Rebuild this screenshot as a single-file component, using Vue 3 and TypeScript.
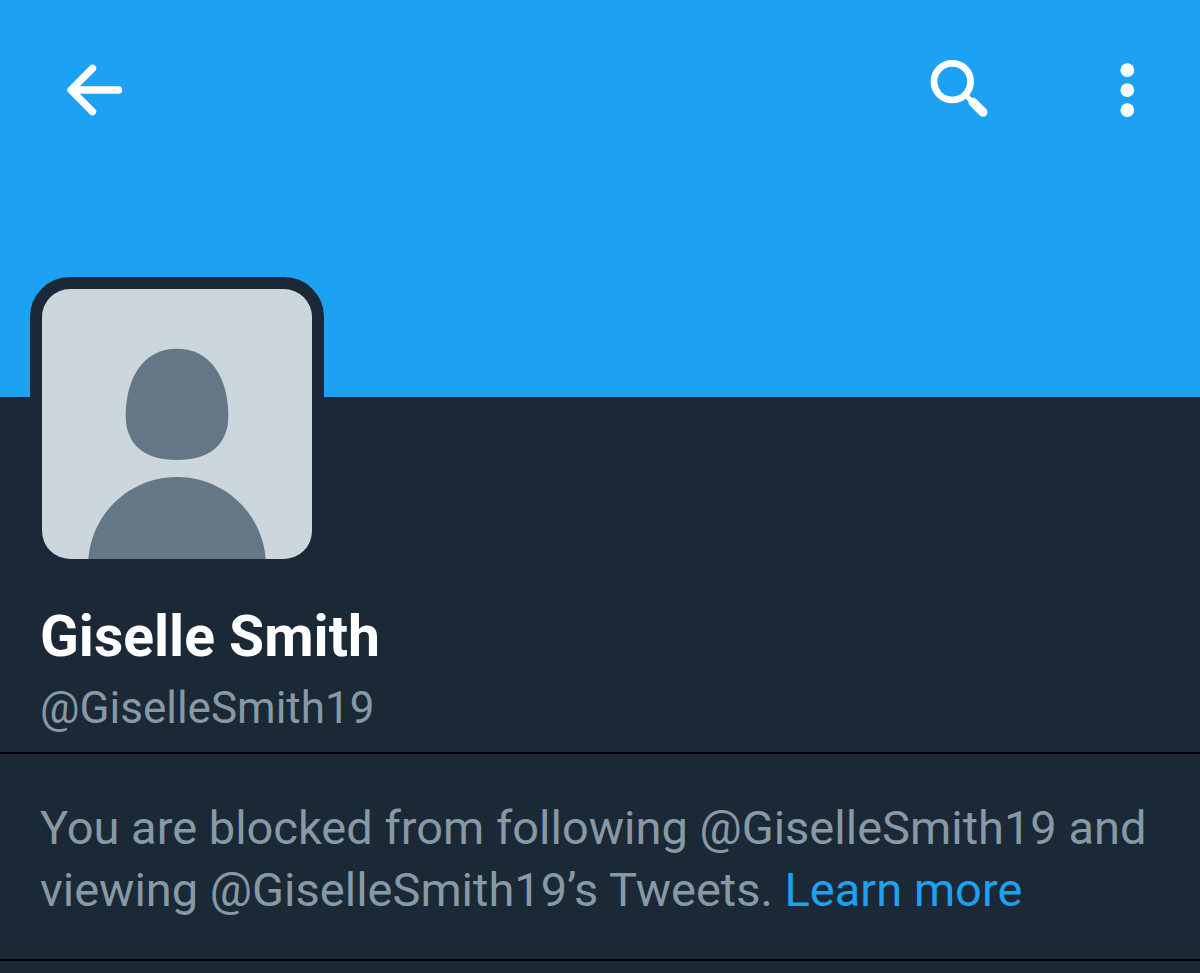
<script setup lang="ts">
interface Profile {
  name: string
  handle: string
}

const profile: Profile = {
  name: 'Giselle Smith',
  handle: '@GiselleSmith19',
}
</script>

<template>
  <main class="profile">
    <header class="banner">
      <nav class="toolbar" aria-label="Profile">
        <button class="icon-button" type="button" aria-label="Back">
          <svg viewBox="0 0 60 60" aria-hidden="true">
            <path class="stroke arrow" d="M27.5 8.3 6 30l21.5 21.7M7 30h46.5" />
          </svg>
        </button>
        <div class="actions">
          <button class="icon-button" type="button" aria-label="Search">
            <svg viewBox="0 0 60 60" aria-hidden="true">
              <circle class="stroke lens" cx="23.3" cy="21.6" r="18.3" />
              <path class="stroke neck" d="M36 34.5 43 41.5" />
              <path class="stroke handle-grip" d="M44 42.3 54 52.3" />
            </svg>
          </button>
          <button class="icon-button" type="button" aria-label="More options">
            <svg viewBox="0 0 60 60" aria-hidden="true">
              <circle cx="30.3" cy="10.2" r="6.9" />
              <circle cx="30.3" cy="30.2" r="6.9" />
              <circle cx="30.3" cy="50.1" r="6.9" />
            </svg>
          </button>
        </div>
      </nav>
    </header>

    <section class="identity">
      <div class="avatar">
        <svg viewBox="0 0 270 270" role="img" aria-label="Default avatar">
          <path
            d="M135 59.7C168 59.7 186.3 88 186.3 127C186.3 156 167 171 135 171C103 171 83.7 156 83.7 127C83.7 88 102 59.7 135 59.7Z"
          />
          <path d="M46.3 270C50 223 89 188 135 188S220 223 223.7 270Z" />
        </svg>
      </div>
      <h1 class="name">{{ profile.name }}</h1>
      <p class="handle">{{ profile.handle }}</p>
    </section>

    <section class="notice">
      <p>
        You are blocked from following {{ profile.handle }} and viewing
        {{ profile.handle }}’s Tweets. <a href="#">Learn more</a>
      </p>
    </section>
  </main>
</template>

<style>
body {
  margin: 0;
  background: #1b2936;
}
</style>

<style scoped>
.profile {
  min-height: 100vh;
  background: #1b2936;
  color: #8899a6;
  font-family: Roboto, "Liberation Sans", sans-serif;
}

.banner {
  box-sizing: border-box;
  height: 397px;
  padding: 60px 43px 0 65px;
  background: #1da1f2;
}

.toolbar,
.actions {
  display: flex;
  align-items: center;
}

.toolbar {
  justify-content: space-between;
}

.actions {
  gap: 108px;
}

.icon-button {
  width: 60px;
  height: 60px;
  padding: 0;
  border: 0;
  background: none;
  cursor: pointer;
}

.icon-button svg,
.avatar svg {
  display: block;
  width: 100%;
  height: 100%;
}

.icon-button svg {
  fill: #fff;
}

.icon-button .stroke {
  fill: none;
  stroke: #fff;
  stroke-linecap: round;
  stroke-linejoin: round;
}

.icon-button .arrow {
  stroke-width: 7.4;
}

.icon-button .lens {
  stroke-width: 6.8;
}

.icon-button .neck {
  stroke-width: 5;
}

.icon-button .handle-grip {
  stroke-width: 9;
}

.identity {
  padding: 0 40px 18px;
  border-bottom: 2px solid #000009;
}

.avatar {
  width: 270px;
  height: 270px;
  margin: -120px 0 34px -10px;
  border: 12px solid #1b2936;
  border-radius: 40px;
  background: #1b2936;
}

.avatar svg {
  border-radius: 28px;
  background: #ccd6dd;
  fill: #657786;
}

.name {
  margin: 0;
  color: #fff;
  font-size: 57px;
  font-weight: 700;
  line-height: 64px;
}

.handle {
  margin: 13px 0 0;
  font-size: 44px;
  line-height: 52px;
}

.notice {
  padding: 43px 40px 38px;
  border-bottom: 2px solid #000009;
}

.notice p {
  margin: 0;
  font-size: 47px;
  line-height: 62px;
}

.notice a {
  color: #1da1f2;
  text-decoration: none;
}
</style>
